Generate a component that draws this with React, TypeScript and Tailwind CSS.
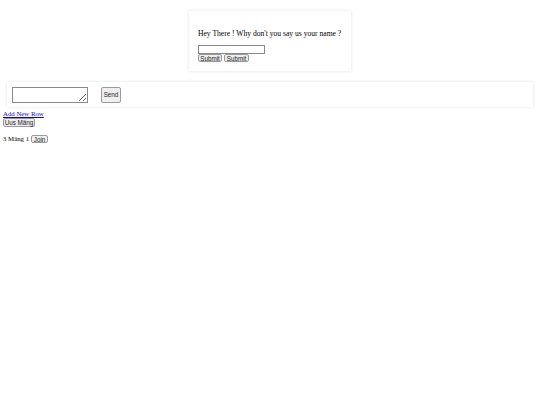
export default function App() {
  const btn =
    "flex items-center justify-center whitespace-nowrap border border-[#9a9a9a] bg-[#efefef] rounded-[2px] px-0 text-[6.3px] leading-[7px] text-[#222] font-['Liberation_Sans',sans-serif]";
  return (
    <div className="min-h-[405px] w-[540px] bg-white font-['Liberation_Serif',serif] text-[10.8px] leading-[12.4px] text-black">
      <div className="pt-[11px]">
        <div className="mx-auto h-[60px] w-[162px] pl-[9px] pt-[17px] shadow-[0_0_3px_rgba(0,0,0,0.12)]">
          <p className="text-[7.6px] leading-[9px] pt-[1px] whitespace-nowrap">Hey There ! Why don't you say us your name ?</p>
          <div className="mt-[7px] flex flex-col items-start">
            <input className="h-[9px] w-[67px] border border-[#8a8a8a] bg-white" />
            <div className="flex gap-[2px]">
              <button className={btn + " h-[8px] w-[24px]"}>Submit</button>
              <button className={btn + " h-[8px] w-[25px]"}>Submit</button>
            </div>
          </div>
        </div>
      </div>
      <div className="mx-[7px] mt-[11px] flex h-[25px] items-center gap-[13px] pl-[5px] shadow-[0_0_3px_rgba(0,0,0,0.12)]">
        <textarea className="h-[16px] w-[76px] resize-y border border-[#8a8a8a] bg-white" />
        <button className={btn + " h-[16px] w-[20px]"}>Send</button>
      </div>
      <div className="pl-[3px] pt-[3px]">
        <a href="#" className="block text-[6.8px] leading-[8px] text-[#0000ee] underline">
          Add New Row
        </a>
        <button className={btn + " h-[9px] w-[32px]"}>Uus Mäng</button>
        <div className="mt-[8px] flex items-center gap-[2px] text-[6.8px] leading-[8px]">
          <span>3 Mäng 1</span>
          <button className={btn + " h-[8px] w-[17px]"}>Join</button>
        </div>
      </div>
    </div>
  );
}
